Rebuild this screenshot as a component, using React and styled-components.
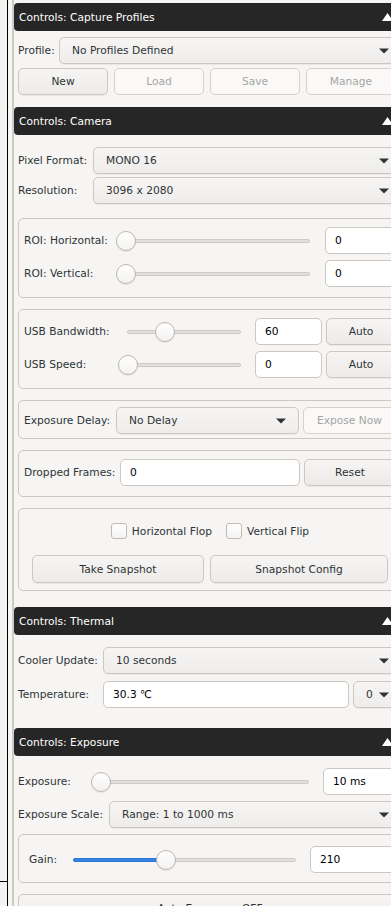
import React from 'react';
import styled, { createGlobalStyle } from 'styled-components';

const GlobalStyle = createGlobalStyle`
  html, body {
    margin: 0;
    padding: 0;
    background: #f6f5f4;
  }
  body {
    font-family: "DejaVu Sans", "Noto Sans", sans-serif;
    font-size: 10.67px;
    color: #2e3436;
  }
  * { box-sizing: border-box; }
`;

const Screen = styled.div`
  display: flex;
  width: 391px;
  height: 906px;
  overflow: hidden;
  background: #f6f5f4;
`;

// narrow pane on the left, cut off by the window edge
const SidePane = styled.div`
  flex: 0 0 8px;
  border-right: 1px solid #000;
  background: #f3f3f3;
`;

const SideTop = styled.div`
  height: 882px;
  border-bottom: 1px solid #000;
`;

const Separator = styled.div`
  flex: 0 0 6px;
  border-right: 2px solid #d0cac5;
`;

const Panel = styled.div`
  flex: 0 0 392px;
  padding-top: 3px;
`;

const Header = styled.div`
  height: 28px;
  display: flex;
  align-items: center;
  justify-content: space-between;
  padding: 0 13px 0 5px;
  background: #262626;
  border-radius: 4px;
  color: #fff;
`;

const Body = styled.div`
  display: flex;
  flex-direction: column;
  gap: ${(p) => p.$gap}px;
  padding: ${(p) => p.$top}px 4px ${(p) => p.$bottom}px;
`;

const Grid = styled.div`
  display: grid;
  grid-template-columns: ${(p) => p.$cols};
  column-gap: ${(p) => (p.$cgap !== undefined ? p.$cgap : 4)}px;
  row-gap: ${(p) => p.$rgap || 0}px;
  align-items: center;
  margin-bottom: ${(p) => p.$mb || 0}px;
`;

const Frame = styled.div`
  border: 1px solid #cdc7c2;
  border-radius: 5px;
  padding: ${(p) => p.$pad};
`;

const Label = styled.span`
  white-space: nowrap;
  color: #2e3436;
`;

const ComboBox = styled.div`
  height: 27px;
  display: flex;
  align-items: center;
  justify-content: space-between;
  gap: 4px;
  padding: 0 12px;
  border: 1px solid #cdc7c2;
  border-radius: 5px;
  background: linear-gradient(#f6f5f4, #efedec);
  box-shadow: 0 1px 0 rgba(0, 0, 0, 0.05);
  white-space: nowrap;
  grid-column: ${(p) => p.$span || 'auto'};
`;

const Button = styled.div`
  height: ${(p) => p.$h || 27}px;
  display: flex;
  align-items: center;
  justify-content: center;
  border: 1px solid ${(p) => (p.$disabled ? '#d6d1cd' : '#cdc7c2')};
  border-radius: 5px;
  background: ${(p) => (p.$disabled ? '#faf9f8' : 'linear-gradient(#f6f5f4, #edebe9)')};
  box-shadow: ${(p) => (p.$disabled ? 'none' : '0 1px 0 rgba(0, 0, 0, 0.05)')};
  color: ${(p) => (p.$disabled ? '#a4a6a5' : '#2e3436')};
  white-space: nowrap;
  margin-top: ${(p) => p.$mt || 0}px;
`;

const Entry = styled.input`
  height: 27px;
  width: 100%;
  min-width: 0;
  padding: 0 9px;
  border: 1px solid #cdc7c2;
  border-radius: 5px;
  background: #fff;
  font: inherit;
  color: #000;
  outline: none;
`;

const SliderWrap = styled.div`
  position: relative;
  height: 27px;
  padding: 0 10px;
  display: flex;
  align-items: center;
`;

const Track = styled.div`
  position: relative;
  flex: 1;
  height: 4px;
  border: 1px solid #cfcac5;
  border-radius: 3px;
  background: #e2dfdc;
`;

const Fill = styled.div`
  position: absolute;
  left: -1px;
  top: -1px;
  bottom: -1px;
  border-radius: 3px;
  background: #3584e4;
  border: 1px solid #2a76d2;
`;

const Knob = styled.div`
  position: absolute;
  top: 50%;
  width: 20px;
  height: 20px;
  border-radius: 50%;
  transform: translate(-50%, -50%);
  border: 1px solid #bdb6b0;
  background: linear-gradient(#ffffff, #f3f2f1);
  box-shadow: 0 1px 1px rgba(0, 0, 0, 0.08);
`;

const CheckRow = styled.div`
  height: 22px;
  display: flex;
  align-items: center;
  justify-content: center;
  gap: 14px;
  margin-bottom: 13px;
`;

const Check = styled.label`
  display: flex;
  align-items: center;
  gap: 5px;
`;

const CheckBox = styled.span`
  width: 16px;
  height: 16px;
  border: 1px solid #c2bbb5;
  border-radius: 3px;
  background: linear-gradient(#ffffff, #f4f3f2);
`;

const SnapRow = styled.div`
  display: grid;
  grid-template-columns: 172px 178px;
  gap: 6px;
  justify-content: center;
`;

const ButtonRow = styled.div`
  display: grid;
  grid-template-columns: repeat(4, 90px);
  gap: 6px;
`;

const UpArrow = () => (
  <svg width="11" height="8" viewBox="0 0 11 8">
    <path d="M0 8 L5.5 0 L11 8 Z" fill="#fff" />
  </svg>
);

const DownArrow = () => (
  <svg width="10" height="6" viewBox="0 0 10 6">
    <path d="M0 0.5 L10 0.5 L5 5.5 Z" fill="#2e3436" />
  </svg>
);

const Combo = ({ children, span }) => (
  <ComboBox $span={span}>
    <span>{children}</span>
    <DownArrow />
  </ComboBox>
);

const Slider = ({ value, fill }) => (
  <SliderWrap>
    <Track>
      {fill && <Fill style={{ width: `${value}%` }} />}
      <Knob style={{ left: `${value}%` }} />
    </Track>
  </SliderWrap>
);

const Section = ({ title }) => (
  <Header>
    <span>Controls: {title}</span>
    <UpArrow />
  </Header>
);

export default function App() {
  return (
    <>
      <GlobalStyle />
      <Screen>
        <SidePane>
          <SideTop />
        </SidePane>
        <Separator />
        <Panel>
          <Section title="Capture Profiles" />
          <Body $top={6} $bottom={12} $gap={4}>
            <Grid $cols="37px 1fr" $cgap={4}>
              <Label>Profile:</Label>
              <Combo>No Profiles Defined</Combo>
            </Grid>
            <ButtonRow>
              <Button>New</Button>
              <Button $disabled>Load</Button>
              <Button $disabled>Save</Button>
              <Button $disabled>Manage</Button>
            </ButtonRow>
          </Body>

          <Section title="Camera" />
          <Body $top={12} $bottom={16} $gap={11}>
            <Grid $cols="71px 1fr" $rgap={3} $mb={3}>
              <Label>Pixel Format:</Label>
              <Combo>MONO 16</Combo>
              <Label>Resolution:</Label>
              <Combo>3096 x 2080</Combo>
            </Grid>

            <Frame $pad="8px 5px 10px 5px">
              <Grid $cols="86px 1fr 71px" $cgap={5} $rgap={6}>
                <Label>ROI: Horizontal:</Label>
                <Slider value={0} />
                <Entry defaultValue="0" readOnly />
                <Label>ROI: Vertical:</Label>
                <Slider value={0} />
                <Entry defaultValue="0" readOnly />
              </Grid>
            </Frame>

            <Frame $pad="8px 5px 10px 5px">
              <Grid $cols="89px 1fr 67px 70px" $rgap={6}>
                <Label>USB Bandwidth:</Label>
                <Slider value={33} />
                <Entry defaultValue="60" readOnly />
                <Button>Auto</Button>
                <Label>USB Speed:</Label>
                <Slider value={0} />
                <Entry defaultValue="0" readOnly />
                <Button>Auto</Button>
              </Grid>
            </Frame>

            <Frame $pad="6px 5px 4px 5px">
              <Grid $cols="88px 183px 1fr">
                <Label>Exposure Delay:</Label>
                <Combo>No Delay</Combo>
                <Button $disabled>Expose Now</Button>
              </Grid>
            </Frame>

            <Frame $pad="8px 5px 10px 5px">
              <Grid $cols="92px 180px 1fr">
                <Label>Dropped Frames:</Label>
                <Entry defaultValue="0" readOnly />
                <Button>Reset</Button>
              </Grid>
            </Frame>

            <Frame $pad="11px 0 7px">
              <CheckRow>
                <Check>
                  <CheckBox />
                  Horizontal Flop
                </Check>
                <Check>
                  <CheckBox />
                  Vertical Flip
                </Check>
              </CheckRow>
              <SnapRow>
                <Button $h={28}>Take Snapshot</Button>
                <Button $h={28}>Snapshot Config</Button>
              </SnapRow>
            </Frame>
          </Body>

          <Section title="Thermal" />
          <Body $top={12} $bottom={20} $gap={0}>
            <Grid $cols="81px 1fr 49px" $rgap={7}>
              <Label>Cooler Update:</Label>
              <Combo span="2 / 4">10 seconds</Combo>
              <Label>Temperature:</Label>
              <Entry defaultValue="30.3 ℃" readOnly />
              <Combo>0</Combo>
            </Grid>
          </Body>

          <Section title="Exposure" />
          <Body $top={12} $bottom={12} $gap={6}>
            <Grid $cols="68px 1fr 79px">
              <Label>Exposure:</Label>
              <Slider value={0} />
              <Entry defaultValue="10 ms" readOnly />
            </Grid>
            <Grid $cols="87px 1fr">
              <Label>Exposure Scale:</Label>
              <Combo>Range: 1 to 1000 ms</Combo>
            </Grid>
            <Frame $pad="11px 5px 9px 10px">
              <Grid $cols="30px 1fr 86px">
                <Label>Gain:</Label>
                <Slider value={41.5} fill />
                <Entry defaultValue="210" readOnly />
              </Grid>
            </Frame>
            <Button $h={28} $mt={5}>Auto Exposure: OFF</Button>
          </Body>
        </Panel>
      </Screen>
    </>
  );
}
